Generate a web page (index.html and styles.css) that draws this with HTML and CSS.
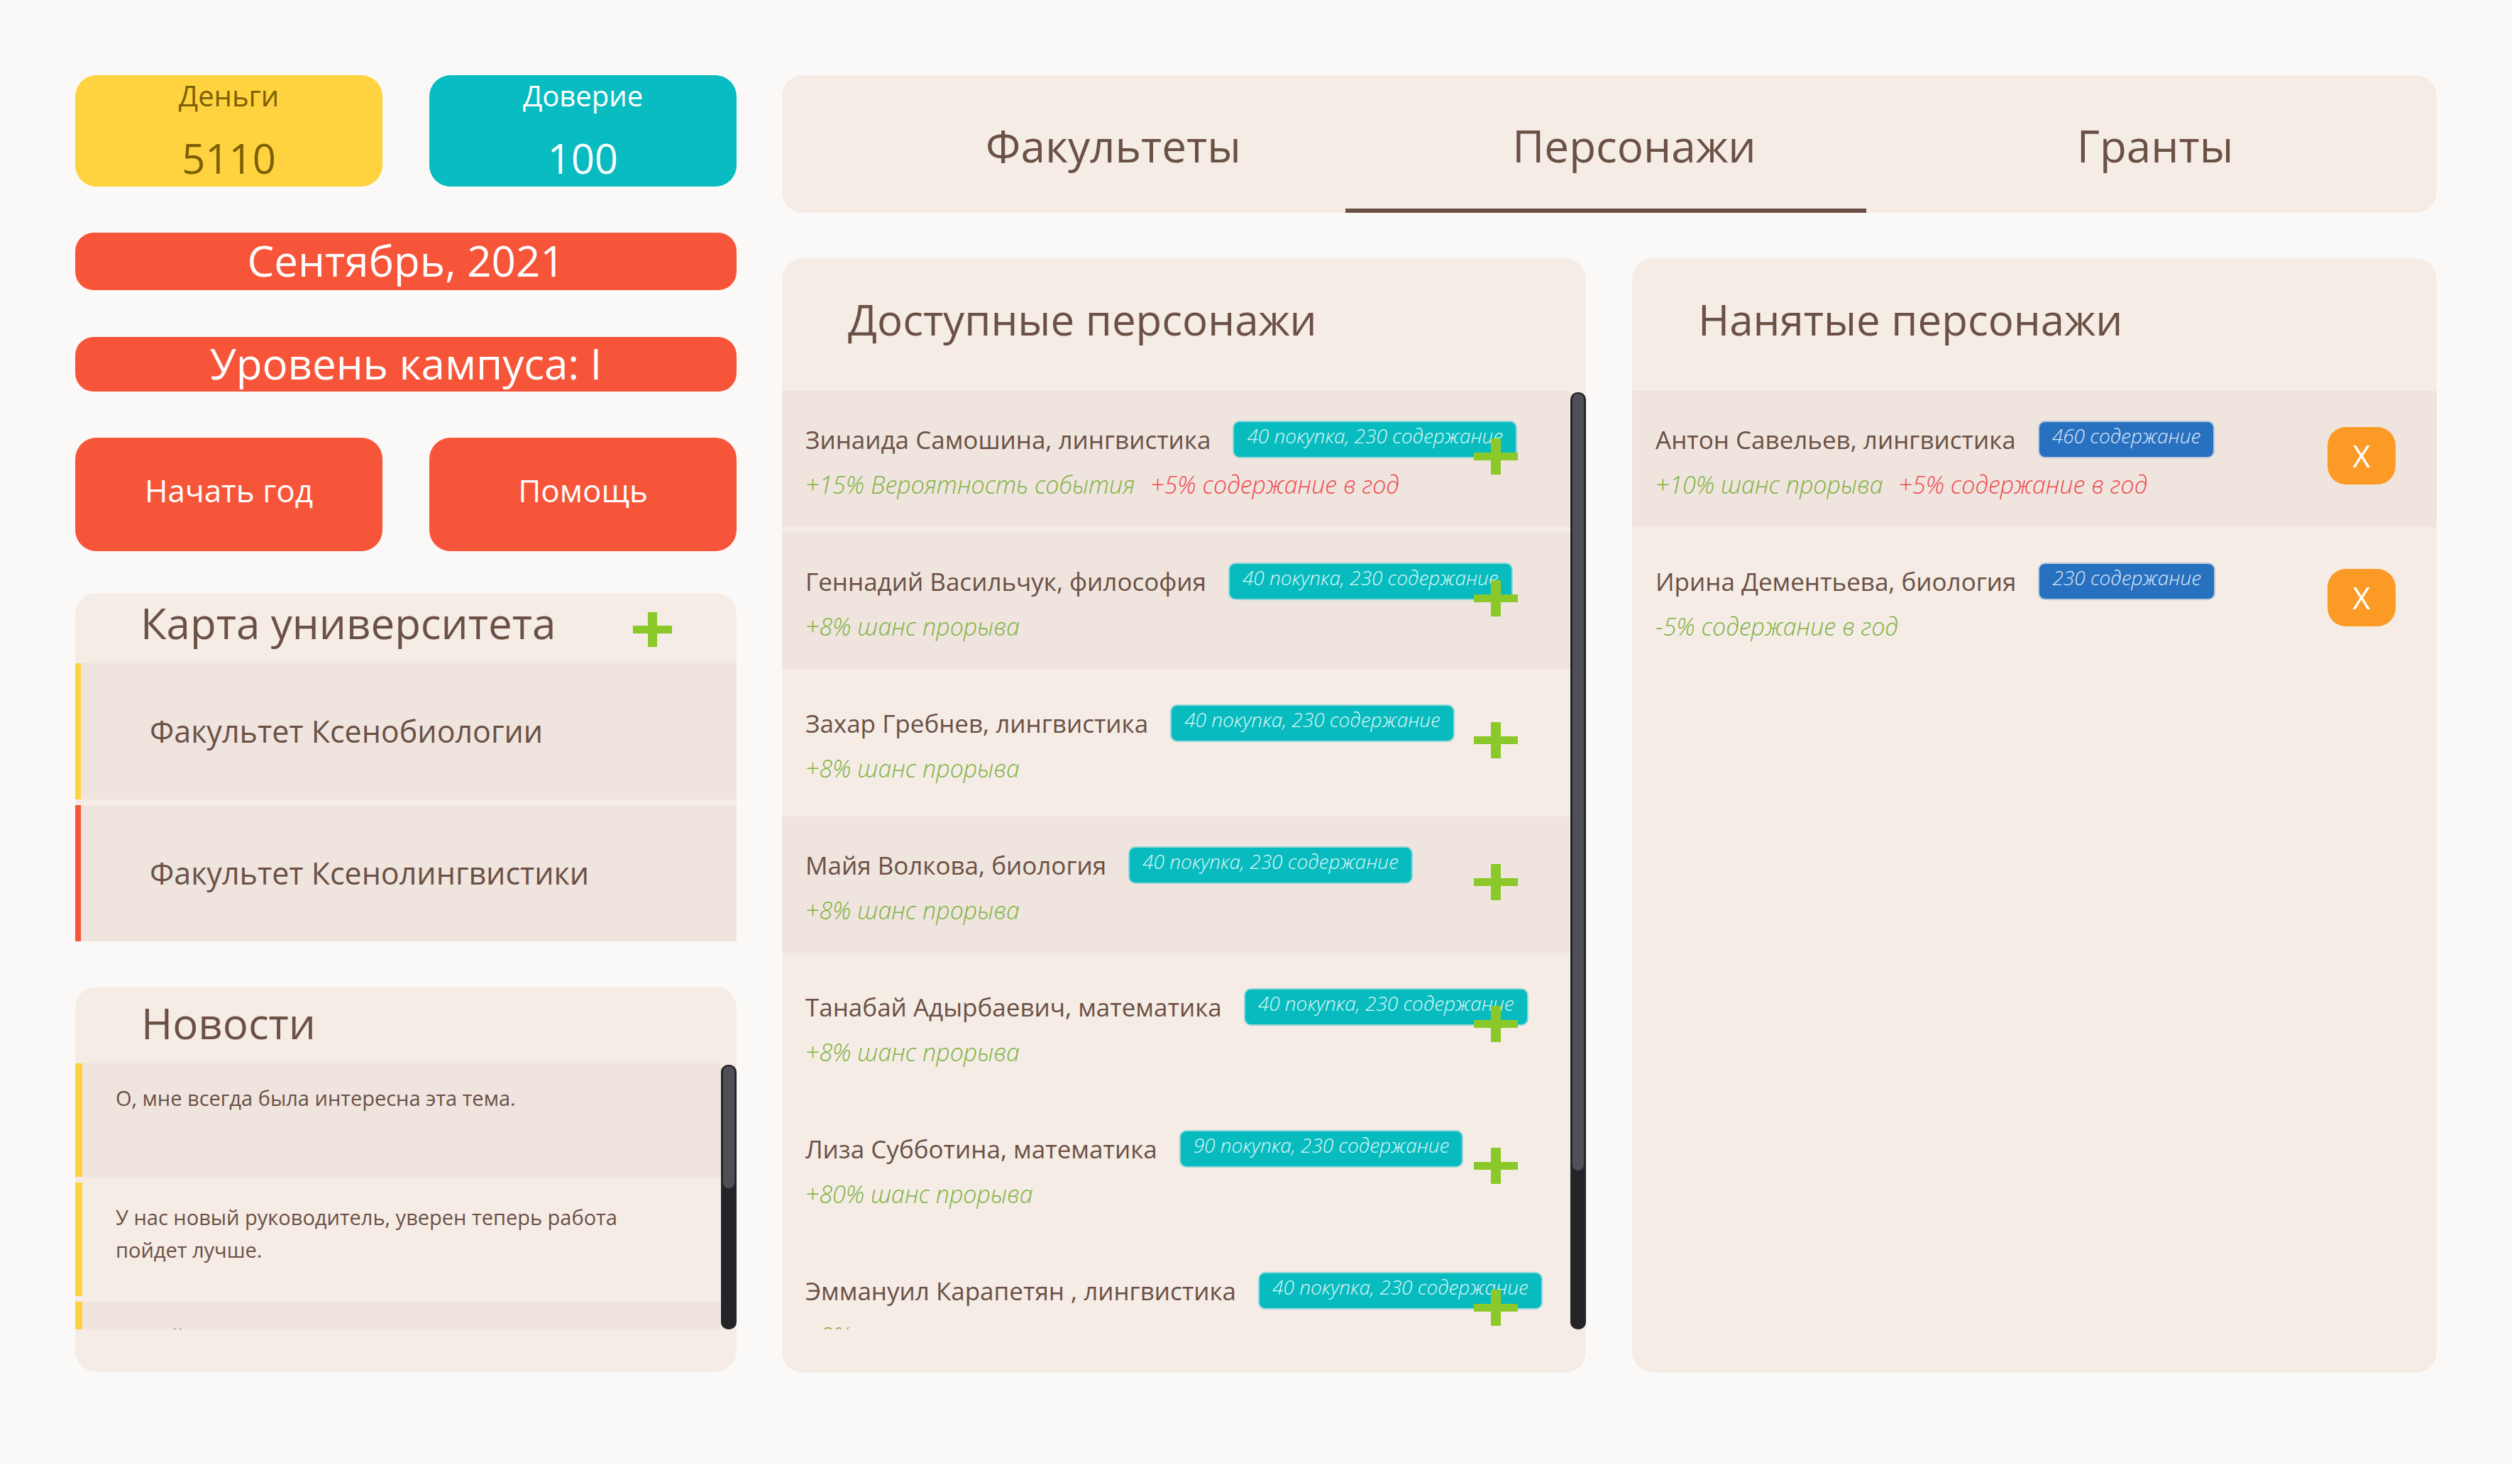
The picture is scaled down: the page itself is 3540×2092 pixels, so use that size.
FILE: index.html
```html
<!DOCTYPE html>
<html lang="ru">
<head>
<meta charset="utf-8">
<title>Университет</title>
<link rel="stylesheet" href="styles.css">
</head>
<body>
<div class="app">
  <aside class="side">
    <div class="stats">
      <div class="stat stat-money">
        <div class="stat-label">Деньги</div>
        <div class="stat-value">5110</div>
      </div>
      <div class="stat stat-trust">
        <div class="stat-label">Доверие</div>
        <div class="stat-value">100</div>
      </div>
    </div>
    <div class="banner banner-date">Сентябрь, 2021</div>
    <div class="banner banner-level">Уровень кампуса: I</div>
    <div class="actions">
      <button class="action">Начать год</button>
      <button class="action">Помощь</button>
    </div>
    <section class="map">
      <header class="map-head">
        <h2 class="map-title">Карта университета</h2>
        <svg class="plus plus-map" viewBox="0 0 55 49" aria-hidden="true"><rect x="21" y="0" width="13" height="49"/><rect x="0" y="19" width="55" height="11"/></svg>
      </header>
      <div class="fac fac-yellow">Факультет Ксенобиологии</div>
      <div class="fac fac-red">Факультет Ксенолингвистики</div>
    </section>
    <section class="news">
      <h2 class="news-title">Новости</h2>
      <div class="news-body">
        <div class="news-list">
          <div class="news-item dark"><p class="news-text">О, мне всегда была интересна эта тема.</p></div>
          <div class="news-item"><p class="news-text">У нас новый руководитель, уверен теперь работа пойдет лучше.</p></div>
          <div class="news-item dark"><p class="news-text">Новый семестр начинается.</p></div>
        </div>
        <div class="scroll scroll-news"><div class="thumb thumb-news"></div></div>
      </div>
    </section>
  </aside>

  <main class="main">
    <nav class="tabs">
      <div class="tab">Факультеты</div>
      <div class="tab active">Персонажи</div>
      <div class="tab">Гранты</div>
    </nav>
    <div class="boards">
      <section class="board">
        <h2 class="board-title">Доступные персонажи</h2>
        <div class="board-body">
          <div class="char-list">
            <div class="char dark">
              <div class="char-line"><span class="char-name">Зинаида Самошина, лингвистика</span><span class="badge badge-teal">40 покупка, 230 содержание</span></div>
              <div class="char-stats"><span class="good">+15% Вероятность события</span><span class="bad">+5% содержание в год</span></div>
              <svg class="plus plus-add" viewBox="0 0 62 51" aria-hidden="true"><rect x="24" y="0" width="14" height="51"/><rect x="0" y="20" width="62" height="11"/></svg>
            </div>
            <div class="char dark">
              <div class="char-line"><span class="char-name">Геннадий Васильчук, философия</span><span class="badge badge-teal">40 покупка, 230 содержание</span></div>
              <div class="char-stats"><span class="good">+8% шанс прорыва</span></div>
              <svg class="plus plus-add" viewBox="0 0 62 51" aria-hidden="true"><rect x="24" y="0" width="14" height="51"/><rect x="0" y="20" width="62" height="11"/></svg>
            </div>
            <div class="char">
              <div class="char-line"><span class="char-name">Захар Гребнев, лингвистика</span><span class="badge badge-teal">40 покупка, 230 содержание</span></div>
              <div class="char-stats"><span class="good">+8% шанс прорыва</span></div>
              <svg class="plus plus-add" viewBox="0 0 62 51" aria-hidden="true"><rect x="24" y="0" width="14" height="51"/><rect x="0" y="20" width="62" height="11"/></svg>
            </div>
            <div class="char dark">
              <div class="char-line"><span class="char-name">Майя Волкова, биология</span><span class="badge badge-teal">40 покупка, 230 содержание</span></div>
              <div class="char-stats"><span class="good">+8% шанс прорыва</span></div>
              <svg class="plus plus-add" viewBox="0 0 62 51" aria-hidden="true"><rect x="24" y="0" width="14" height="51"/><rect x="0" y="20" width="62" height="11"/></svg>
            </div>
            <div class="char">
              <div class="char-line"><span class="char-name">Танабай Адырбаевич, математика</span><span class="badge badge-teal">40 покупка, 230 содержание</span></div>
              <div class="char-stats"><span class="good">+8% шанс прорыва</span></div>
              <svg class="plus plus-add" viewBox="0 0 62 51" aria-hidden="true"><rect x="24" y="0" width="14" height="51"/><rect x="0" y="20" width="62" height="11"/></svg>
            </div>
            <div class="char">
              <div class="char-line"><span class="char-name">Лиза Субботина, математика</span><span class="badge badge-teal">90 покупка, 230 содержание</span></div>
              <div class="char-stats"><span class="good">+80% шанс прорыва</span></div>
              <svg class="plus plus-add" viewBox="0 0 62 51" aria-hidden="true"><rect x="24" y="0" width="14" height="51"/><rect x="0" y="20" width="62" height="11"/></svg>
            </div>
            <div class="char">
              <div class="char-line"><span class="char-name">Эммануил Карапетян , лингвистика</span><span class="badge badge-teal">40 покупка, 230 содержание</span></div>
              <div class="char-stats"><span class="good">+8% шанс прорыва</span></div>
              <svg class="plus plus-add" viewBox="0 0 62 51" aria-hidden="true"><rect x="24" y="0" width="14" height="51"/><rect x="0" y="20" width="62" height="11"/></svg>
            </div>
          </div>
          <div class="scroll scroll-chars"><div class="thumb thumb-chars"></div></div>
        </div>
      </section>

      <section class="board">
        <h2 class="board-title">Нанятые персонажи</h2>
        <div class="hired-list">
          <div class="char hired dark">
            <div class="hired-info">
              <div class="char-line"><span class="char-name">Антон Савельев, лингвистика</span><span class="badge badge-blue">460 содержание</span></div>
              <div class="char-stats"><span class="good">+10% шанс прорыва</span><span class="bad">+5% содержание в год</span></div>
            </div>
            <button class="fire">X</button>
          </div>
          <div class="char hired">
            <div class="hired-info">
              <div class="char-line"><span class="char-name">Ирина Дементьева, биология</span><span class="badge badge-blue">230 содержание</span></div>
              <div class="char-stats"><span class="good">-5% содержание в год</span></div>
            </div>
            <button class="fire">X</button>
          </div>
        </div>
      </section>
    </div>
  </main>
</div>
</body>
</html>
```

FILE: styles.css
```css
html, body {
  margin: 0;
  padding: 0;
  background: #ffffff;
}

body {
  font-family: "Open Sans", "Noto Sans", sans-serif;
  color: #6b5045;
}

h2, p {
  margin: 0;
  font-weight: 400;
}

button {
  font-family: inherit;
  border: 0;
  padding: 0;
  cursor: pointer;
}

.app {
  box-sizing: border-box;
  height: 2064px;
  padding: 106px 106px 0;
  background: #fbf9f7;
  display: grid;
  grid-template-columns: 932px 1fr;
  column-gap: 64px;
  align-items: start;
}

/* ---------- left column ---------- */
.side {
  display: flex;
  flex-direction: column;
}

.stats {
  display: flex;
  justify-content: space-between;
}

.stat {
  box-sizing: border-box;
  width: 433px;
  height: 157px;
  border-radius: 30px;
  padding-top: 2px;
  text-align: center;
}

.stat-money {
  background: #ffd33f;
  color: #7e6004;
}

.stat-trust {
  background: #09bcc1;
  color: #ffffff;
}

.stat-label {
  font-size: 40px;
  line-height: 54px;
}

.stat-value {
  margin-top: 21px;
  font-size: 58px;
  line-height: 79px;
}

.banner {
  background: #f75539;
  color: #ffffff;
  text-align: center;
  font-size: 60px;
  border-radius: 26px;
}

.banner-date {
  margin-top: 65px;
  height: 81px;
  line-height: 79px;
}

.banner-level {
  margin-top: 66px;
  height: 77px;
  line-height: 75px;
}

.actions {
  margin-top: 65px;
  display: flex;
  justify-content: space-between;
}

.action {
  box-sizing: border-box;
  width: 433px;
  height: 160px;
  padding-bottom: 12px;
  border-radius: 30px;
  background: #f75539;
  color: #ffffff;
  font-size: 44px;
}

.map {
  margin-top: 59px;
  background: #f5ece6;
  border-radius: 30px 30px 0 0;
}

.map-head {
  box-sizing: border-box;
  height: 99px;
  display: flex;
  justify-content: space-between;
  align-items: flex-start;
  padding: 0 91px 0 92px;
}

.map-title {
  font-size: 60px;
  line-height: 85px;
}

.plus {
  fill: #8bc92a;
  display: block;
}

.plus-map {
  width: 55px;
  height: 49px;
  margin-top: 27px;
}

.fac {
  box-sizing: border-box;
  height: 192px;
  line-height: 192px;
  background: #efe5de;
  padding-left: 97px;
  font-size: 43px;
  border-left: 8px solid #ffd33f;
}

.fac + .fac {
  margin-top: 8px;
}

.fac-red {
  border-left-color: #f75539;
}

.news {
  margin-top: 64px;
  box-sizing: border-box;
  height: 543px;
  padding-bottom: 60px;
  background: #f5ece6;
  border-radius: 30px;
  display: flex;
  flex-direction: column;
}

.news-title {
  box-sizing: border-box;
  height: 108px;
  padding: 10px 0 0 93px;
  font-size: 60px;
  line-height: 82px;
}

.news-body {
  flex: 1;
  display: flex;
  min-height: 0;
}

.news-list {
  flex: 1;
  overflow: hidden;
}

.news-item {
  box-sizing: border-box;
  height: 160px;
  margin-bottom: 8px;
  border-left: 10px solid #ffd33f;
  padding: 26px 0 0 47px;
  background: #f5ece6;
}

.news-item.dark {
  background: #efe5de;
}

.news-text {
  max-width: 760px;
  font-size: 29px;
  line-height: 46px;
}

/* ---------- scrollbars ---------- */
.scroll {
  box-sizing: border-box;
  width: 22px;
  margin-top: 2px;
  background: #252429;
  border-radius: 10px;
  padding: 2px 3px;
}

.thumb {
  background: #504f57;
  border-radius: 8px;
}

.thumb-news {
  height: 172px;
}

.thumb-chars {
  height: 1095px;
}

/* ---------- main area ---------- */
.main {
  display: flex;
  flex-direction: column;
}

.tabs {
  box-sizing: border-box;
  height: 194px;
  padding: 0 70px 0 60px;
  display: flex;
  background: #f5ece6;
  border-radius: 30px;
}

.tab {
  flex: 1;
  display: flex;
  align-items: center;
  justify-content: center;
  padding: 4px 0 0 80px;
  font-size: 62px;
  font-weight: 400;
  color: #6b5045;
}

.tab.active {
  box-shadow: inset 0 -6px 0 #6b5045;
}

.boards {
  margin-top: 64px;
  display: grid;
  grid-template-columns: 1133px 1134px;
  column-gap: 65px;
}

.board {
  box-sizing: border-box;
  height: 1571px;
  background: #f5ece6;
  border-radius: 30px;
  overflow: hidden;
  display: flex;
  flex-direction: column;
}

.board-title {
  box-sizing: border-box;
  height: 187px;
  padding: 46px 0 0 93px;
  font-size: 60px;
  line-height: 80px;
  flex-shrink: 0;
}

.board-body {
  height: 1323px;
  display: flex;
}

.char-list {
  flex: 1;
  overflow: hidden;
}

.scroll-chars {
  height: 1321px;
}

.char {
  position: relative;
  box-sizing: border-box;
  height: 192px;
  margin-bottom: 8px;
  padding: 42px 33px 0;
  background: #f5ece6;
}

.char.dark {
  background: #efe5de;
}

.char-line {
  display: flex;
  align-items: flex-start;
}

.char-name {
  font-size: 35px;
  line-height: 53px;
  white-space: nowrap;
}

.badge {
  box-sizing: border-box;
  height: 53px;
  margin-left: 31px;
  padding: 0 18px 10px;
  border: 2px solid rgba(210, 225, 225, 0.7);
  border-radius: 10px;
  font-size: 28px;
  font-style: italic;
  font-weight: 300;
  line-height: 39px;
  white-space: nowrap;
}

.badge-teal {
  background: #07bbbf;
  color: #dff6f6;
}

.badge-blue {
  background: #2870c0;
  color: #dde8f5;
  border-color: rgba(200, 208, 220, 0.9);
}

.char-stats {
  margin-top: 12px;
  font-size: 34px;
  font-style: italic;
  font-weight: 300;
  line-height: 50px;
  white-space: nowrap;
}

.good {
  color: #7fb241;
}

.bad {
  color: #ef4a4f;
  margin-left: 22px;
}

.plus-add {
  position: absolute;
  right: 74px;
  top: 67px;
  width: 62px;
  height: 51px;
}

/* hired */
.hired {
  display: flex;
  align-items: flex-start;
}

.hired-info {
  flex: 1;
}

.fire {
  width: 96px;
  height: 81px;
  margin: 9px 25px 0 0;
  border-radius: 26px;
  background: #fb9b25;
  color: #ffffff;
  font-size: 43px;
  line-height: 81px;
  text-align: center;
}
```
